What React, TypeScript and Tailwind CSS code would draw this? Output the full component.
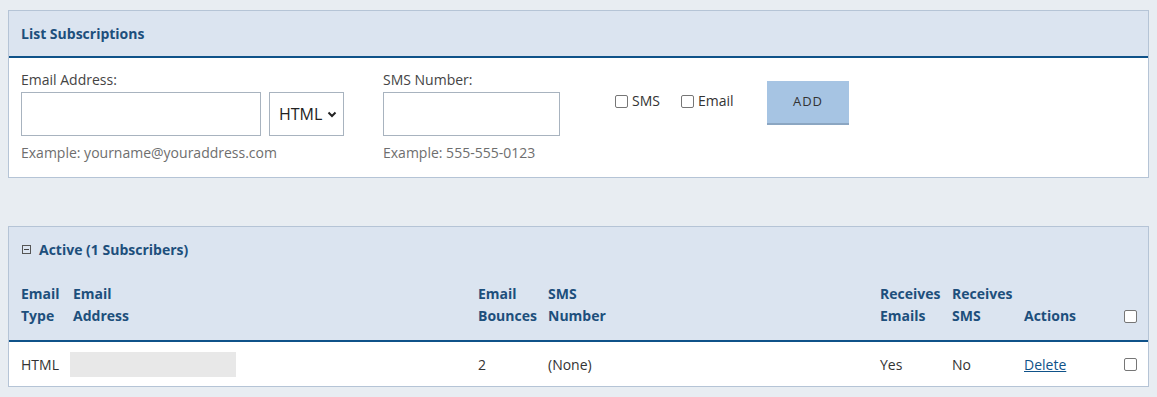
import React from "react";

const font = { fontFamily: "'Open Sans', 'Noto Sans', sans-serif" };

export default function App() {
  return (
    <div className="min-h-[397px] w-[1157px] bg-[#e8edf2] pt-[10px] px-[8px] text-[14px] text-[#333]" style={font}>
      {/* Panel 1 */}
      <div className="border border-[#b5c4d6] bg-white w-[1141px]">
        <div className="h-[47px] bg-[#dbe4f0] border-b-2 border-[#0f5289] flex items-center pl-[12px]">
          <span className="font-bold text-[#1d4f7c] text-[14px]">List Subscriptions</span>
        </div>
        <div className="flex pl-[12px] pt-[11px] pb-[14px]">
          <div className="flex flex-col w-[362px]">
            <label className="leading-[22px] h-[23px] text-[#444]">Email Address:</label>
            <div className="flex gap-[8px]">
              <input className="w-[240px] h-[44px] border border-[#a8b3bf] bg-white" />
              <div className="w-[75px] h-[44px] border border-[#a8b3bf] flex items-center pl-[9px] gap-[5px] text-[16px] text-[#222]">
                <span>HTML</span>
                <svg width="10" height="7" viewBox="0 0 10 7"><path d="M1.5 1.5 L5 5 L8.5 1.5" stroke="#222" strokeWidth="2" fill="none" /></svg>
              </div>
            </div>
            <div className="mt-[7px] leading-[20px] text-[#6e6e6e]">Example: yourname@youraddress.com</div>
          </div>
          <div className="flex flex-col w-[232px]">
            <label className="leading-[22px] h-[23px] text-[#444]">SMS Number:</label>
            <input className="w-[177px] h-[44px] border border-[#a8b3bf] bg-white" />
            <div className="mt-[7px] leading-[20px] text-[#6e6e6e]">Example: 555-555-0123</div>
          </div>
          <div className="flex items-start w-[152px] pt-[22px] gap-[21px]">
            <label className="flex items-center gap-[4px] leading-[20px]">
              <span className="w-[13px] h-[13px] border border-[#767676] rounded-[2px] bg-white inline-block" />
              <span>SMS</span>
            </label>
            <label className="flex items-center gap-[4px] leading-[20px]">
              <span className="w-[13px] h-[13px] border border-[#767676] rounded-[2px] bg-white inline-block" />
              <span>Email</span>
            </label>
          </div>
          <div className="pt-[12px]">
            <button className="w-[82px] h-[44px] bg-[#a6c4e3] border-b-2 border-[#8ba6c2] text-[13px] tracking-[1px] text-[#333]">ADD</button>
          </div>
        </div>
      </div>

      {/* Panel 2 */}
      <div className="mt-[48px] border border-[#b5c4d6] bg-white w-[1141px]">
        <div className="bg-[#dbe4f0] border-b-2 border-[#0f5289]">
          <div className="h-[45px] flex items-center pl-[13px] gap-[8px]">
            <span className="w-[9px] h-[9px] border border-[#555] flex items-center justify-center">
              <span className="w-[5px] h-px bg-[#444]" />
            </span>
            <span className="font-bold text-[#1d4f7c]">Active (1 Subscribers)</span>
          </div>
          <div className="grid grid-cols-[52px_405px_70px_332px_72px_72px_100px_1fr] font-bold text-[#1d4f7c] leading-[22px] pt-[11px] pb-[13px] items-end">
            <div className="pl-[12px]">Email<br />Type</div>
            <div className="pl-[12px]">Email<br />Address</div>
            <div className="pl-[12px]">Email<br />Bounces</div>
            <div className="pl-[12px]">SMS<br />Number</div>
            <div className="pl-[12px]">Receives<br />Emails</div>
            <div className="pl-[12px]">Receives<br />SMS</div>
            <div className="pl-[12px]">Actions</div>
            <div className="pl-[12px] pb-[4px]">
              <span className="block w-[13px] h-[13px] border border-[#767676] rounded-[2px] bg-white" />
            </div>
          </div>
        </div>
        <div className="grid grid-cols-[52px_405px_70px_332px_72px_72px_100px_1fr] h-[44px] items-center text-[#333]">
          <div className="pl-[12px]">HTML</div>
          <div className="pl-[9px]"><div className="w-[166px] h-[25px] bg-[#e8e8e8]" /></div>
          <div className="pl-[12px]">2</div>
          <div className="pl-[12px]">(None)</div>
          <div className="pl-[12px]">Yes</div>
          <div className="pl-[12px]">No</div>
          <div className="pl-[12px]"><a className="underline text-[#0f5289]" href="#">Delete</a></div>
          <div className="pl-[12px]">
            <span className="block w-[13px] h-[13px] border border-[#767676] rounded-[2px] bg-white" />
          </div>
        </div>
      </div>
    </div>
  );
}
